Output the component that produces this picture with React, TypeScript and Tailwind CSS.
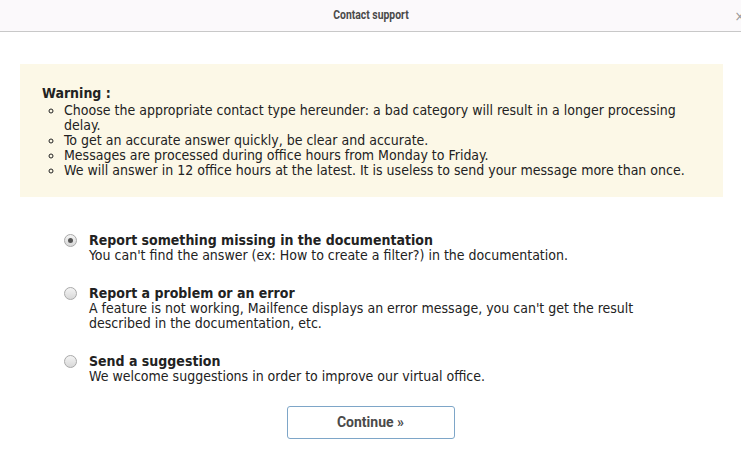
const body = "font-['DejaVu_Sans_Condensed','DejaVu_Sans',sans-serif]";

const options = [
  {
    title: "Report something missing in the documentation",
    desc: "You can't find the answer (ex: How to create a filter?) in the documentation.",
    checked: true,
  },
  {
    title: "Report a problem or an error",
    desc: "A feature is not working, Mailfence displays an error message, you can't get the result described in the documentation, etc.",
    checked: false,
  },
  {
    title: "Send a suggestion",
    desc: "We welcome suggestions in order to improve our virtual office.",
    checked: false,
  },
];

function Radio({ checked }: { checked: boolean }) {
  return (
    <span className="mt-[2px] flex h-[13px] w-[13px] shrink-0 items-center justify-center rounded-full border border-[#a9a9a9] bg-[linear-gradient(#f4f4f4,#d8d8d8)]">
      {checked && <span className="h-[5px] w-[5px] rounded-full bg-[#555]" />}
    </span>
  );
}

export default function App() {
  return (
    <div className={`relative h-[464px] w-[741px] overflow-hidden bg-white text-[#222] ${body}`}>
      <div className="relative flex h-[32px] items-center justify-center border-b border-[#c8c8c8] bg-[#fbf9fb] pb-[3px]">
        <span className="inline-block scale-x-[0.77] font-['Roboto',sans-serif] text-[13.5px] font-bold text-[#4a4a4a]">
          Contact support
        </span>
        <span className="absolute right-[-4px] top-[6px] text-[14px] text-[#999]">×</span>
      </div>

      <div className="pl-[20px] pr-[18px] pt-[32px]">
        <div className="bg-[#fcf8e7] pb-[19px] pl-[22px] pr-[30px] pt-[22px] text-[14px] leading-[15px]">
          <div className="mb-[2px] font-bold">Warning :</div>
          <ul className="list-[circle] pl-[22px]">
            <li>Choose the appropriate contact type hereunder: a bad category will result in a longer processing delay.</li>
            <li>To get an accurate answer quickly, be clear and accurate.</li>
            <li>Messages are processed during office hours from Monday to Friday.</li>
            <li>We will answer in 12 office hours at the latest. It is useless to send your message more than once.</li>
          </ul>
        </div>

        <div className="flex flex-col gap-[21px] pl-[44px] pr-[60px] pt-[35px]">
          {options.map((o) => (
            <label key={o.title} className="flex gap-[12px]">
              <Radio checked={o.checked} />
              <div className="text-[14px] leading-[15.5px]">
                <div className="font-bold leading-[16px]">{o.title}</div>
                <div>{o.desc}</div>
              </div>
            </label>
          ))}
        </div>

        <div className="flex justify-center pt-[22px] pr-[2px]">
          <button className="h-[33px] w-[168px] rounded-[3px] border border-[#7ea6c8] bg-white font-['Roboto',sans-serif] text-[14px] font-bold text-[#4a4a4a]">
            Continue »
          </button>
        </div>
      </div>
    </div>
  );
}
